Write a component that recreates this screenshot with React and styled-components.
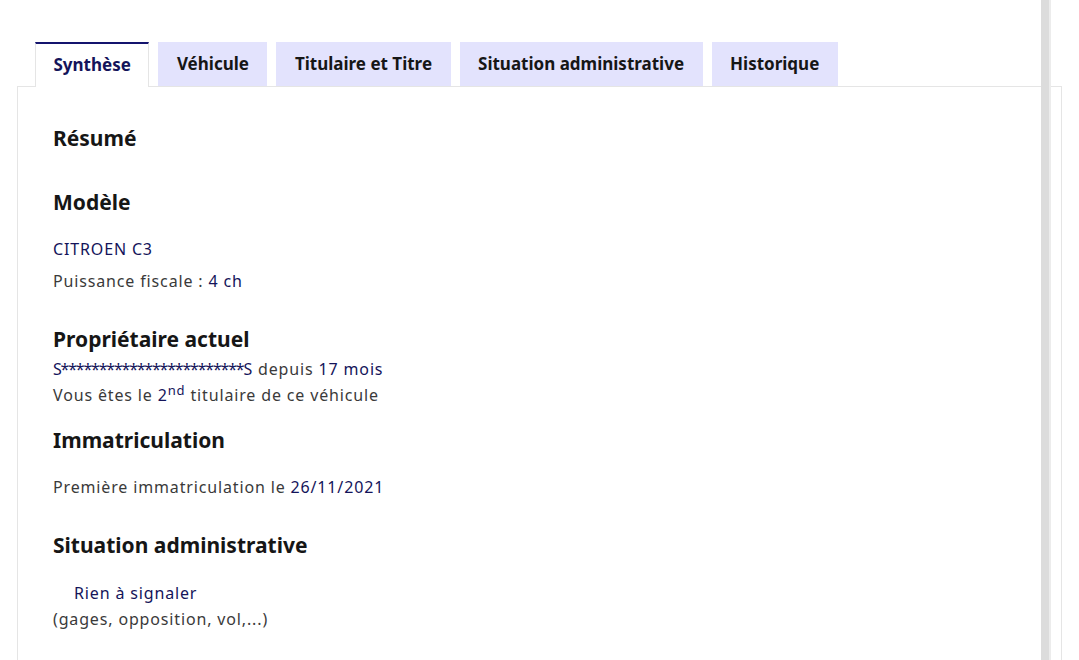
import React from 'react'
import styled, { createGlobalStyle } from 'styled-components'

const Global = createGlobalStyle`
  body {
    margin: 0;
    background: #fff;
    font-family: "Noto Sans", "DejaVu Sans", sans-serif;
    color: #3a3a3a;
  }
`

const Page = styled.div`
  position: relative;
  height: 660px;
  overflow: hidden;
  padding: 42px 0 0 17px;
  box-sizing: border-box;
`

const Divider = styled.div`
  position: absolute;
  top: 0;
  bottom: 0;
  left: 1041px;
  width: 8px;
  background: #dcdcdc;
  border-right: 2px solid #ececec;
`

const Tabs = styled.div`
  display: flex;
  gap: 9px;
  padding-left: 18px;
  position: relative;
  z-index: 1;
`

const Tab = styled.div`
  box-sizing: border-box;
  display: flex;
  align-items: center;
  padding: 0 17.5px 3px;
  font-size: 17px;
  font-weight: 700;
  color: ${p => (p.active ? '#14145a' : '#161616')};
  background: ${p => (p.active ? '#fff' : '#e3e3fd')};
  border-top: 2px solid ${p => (p.active ? '#14146e' : 'transparent')};
  border-left: 1px solid ${p => (p.active ? '#e5e5e5' : 'transparent')};
  border-right: 1px solid ${p => (p.active ? '#e5e5e5' : 'transparent')};
  margin-bottom: ${p => (p.active ? '-1px' : '0')};
  height: ${p => (p.active ? '45px' : '44px')};
`

const Panel = styled.div`
  width: 1045px;
  box-sizing: border-box;
  border: 1px solid #e5e5e5;
  border-bottom: none;
  padding: 35px 35px 40px;
  min-height: 600px;
`

const Title = styled.h2`
  margin: 0;
  font-size: 21px;
  line-height: 32px;
  font-weight: 700;
  color: #161616;
`

const Section = styled.section`
  margin-top: ${p => p.gap || 0}px;
`

const Line = styled.p`
  margin: ${p => p.top || 0}px 0 0;
  font-size: 16px;
  line-height: 26px;
  letter-spacing: 0.85px;
  padding-left: ${p => (p.indent ? '21px' : '0')};
  color: ${p => (p.blue ? '#14145a' : '#3a3a3a')};
`

const Value = styled.span`
  color: #14145a;
`

const Masked = styled.span`
  color: #14145a;
  letter-spacing: -1.2px;
`

const Sup = styled.sup`
  font-size: 13px;
  line-height: 0;
  color: #14145a;
`

export default function App() {
  return (
    <>
      <Global />
      <Page>
        <Tabs>
          <Tab active>Synthèse</Tab>
          <Tab>Véhicule</Tab>
          <Tab>Titulaire et Titre</Tab>
          <Tab>Situation administrative</Tab>
          <Tab>Historique</Tab>
        </Tabs>
        <Panel>
          <Title>Résumé</Title>
          <Section gap={32}>
            <Title>Modèle</Title>
            <Line blue top={18}>CITROEN C3</Line>
            <Line top={6}>Puissance fiscale : <Value>4 ch</Value></Line>
          </Section>
          <Section gap={29}>
            <Title>Propriétaire actuel</Title>
            <Line top={1}><Masked>S************************</Masked><Value>S</Value> depuis <Value>17 mois</Value></Line>
            <Line>Vous êtes le <Value>2</Value><Sup>nd</Sup> titulaire de ce véhicule</Line>
          </Section>
          <Section gap={16}>
            <Title>Immatriculation</Title>
            <Line top={18}>Première immatriculation le <Value>26/11/2021</Value></Line>
          </Section>
          <Section gap={29}>
            <Title>Situation administrative</Title>
            <Line blue indent top={19}>Rien à signaler</Line>
            <Line>(gages, opposition, vol,...)</Line>
          </Section>
        </Panel>
        <Divider />
      </Page>
    </>
  )
}
